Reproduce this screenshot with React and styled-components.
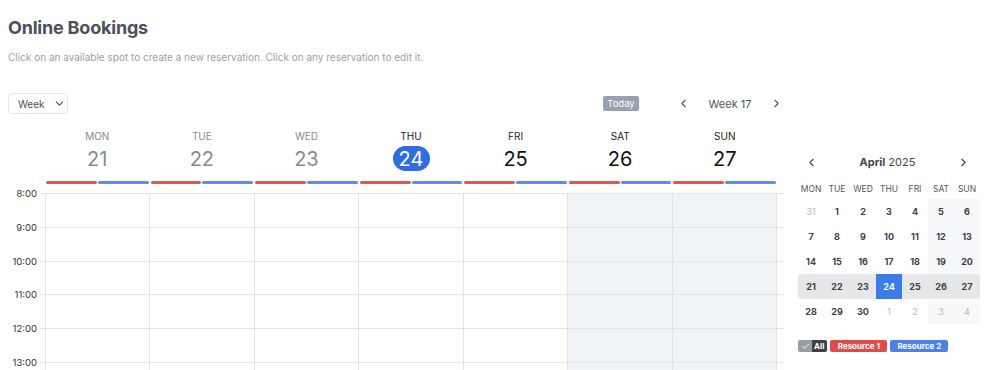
import React from 'react'
import styled, { createGlobalStyle } from 'styled-components'
import { ChevronLeft, ChevronRight, ChevronDown, Check } from 'lucide-react'

const GlobalStyle = createGlobalStyle`
html, body {
    margin: 0;
    padding: 0;
    overflow: hidden;
    background: #fff;
}
body {
    font-family: Inter, "Liberation Sans", Arial, sans-serif;
    color: #374151;
}
`

const HOUR = 33.8

const Page = styled.div`
padding: 14px 4px 0 8px;
`

const Title = styled.h1`
margin: 0;
font-size: 18px;
font-weight: 700;
color: #4b5059;
line-height: 28px;
letter-spacing: -0.2px;
`

const Subtitle = styled.p`
margin: 7px 0 0;
font-size: 10px;
color: #9aa0a8;
line-height: 16px;
`

const Layout = styled.div`
display: flex;
gap: 14px;
margin-top: 28px;
`

const Main = styled.div`
width: 776px;
`

const Toolbar = styled.div`
display: flex;
justify-content: space-between;
align-items: center;
height: 21px;
`

const Dropdown = styled.button`
display: flex;
align-items: center;
gap: 8px;
width: 60px;
height: 21px;
padding: 0 0 0 9px;
border: 1px solid #e3e5e8;
border-radius: 4px;
background: #fff;
font-family: inherit;
font-size: 10px;
color: #4b5059;
`

const Nav = styled.div`
display: flex;
align-items: center;
margin-right: 1px;
`

const TodayButton = styled.button`
height: 15px;
width: 36px;
padding: 0;
border: none;
border-radius: 2px;
background: #98a1b1;
color: #fff;
font-family: inherit;
font-size: 9.5px;
margin-right: 38px;
`

const NavArrow = styled.span`
display: flex;
color: #555;
`

const WeekLabel = styled.span`
font-size: 11px;
color: #555;
width: 80px;
text-align: center;
`

const Header = styled.div`
display: flex;
padding-left: 37px;
padding-right: 7px;
margin-top: 16px;
`

const DayHead = styled.div`
flex: 1;
display: flex;
flex-direction: column;
align-items: center;
`

const DayName = styled.div`
font-size: 10px;
line-height: 12px;
color: ${p => (p.$past ? '#8a8a8a' : '#222')};
`

const DayNum = styled.div`
margin-top: 4px;
height: 25px;
min-width: 37px;
border-radius: 13px;
display: flex;
align-items: center;
justify-content: center;
font-size: 20px;
color: ${p => (p.$today ? '#fff' : p.$past ? '#8a8a8a' : '#111')};
background: ${p => (p.$today ? '#2f6ee0' : 'transparent')};
`

const Bars = styled.div`
align-self: stretch;
display: flex;
gap: 1px;
padding: 0 1px;
margin-top: 10px;
`

const Bar = styled.div`
flex: 1;
height: 3px;
border-radius: 1.5px;
background: ${p => p.$color};
`

const lines = `repeating-linear-gradient(to bottom, #e2e5e8 0, #e2e5e8 1px, transparent 1px, transparent ${HOUR}px)`

const Body = styled.div`
display: flex;
margin-top: 9px;
`

const Times = styled.div`
width: 32px;
flex-shrink: 0;
`

const TimeLabel = styled.div`
height: ${HOUR}px;
padding-right: 3px;
text-align: right;
font-size: 9.5px;
line-height: 12px;
color: #333;
transform: translateY(-5.5px);
`

const Grid = styled.div`
flex: 1;
display: flex;
padding: 0 7px 0 5px;
background-image: ${lines};
height: ${HOUR * 6}px;
`

const DayCol = styled.div`
flex: 1;
border-left: 1px solid #dfe5e7;
background-color: ${p => (p.$weekend ? '#f1f4f7' : 'transparent')};
background-image: ${lines};
&:last-child {
    border-right: 1px solid #dfe5e7;
}
`

const Side = styled.div`
width: 182px;
padding-top: 61px;
`

const MonthHeader = styled.div`
display: flex;
align-items: center;
justify-content: space-between;
padding: 0 10px 0 7px;
height: 16px;
font-size: 11px;
color: #3f4550;
b {
    font-weight: 700;
}
`

const MiniRow = styled.div`
display: grid;
grid-template-columns: repeat(7, 1fr);
height: 25px;
border-radius: 3px;
background: ${p => (p.$selected ? '#e6e7e9' : 'transparent')};
`

const WeekNames = styled(MiniRow)`
height: 20px;
margin-top: 9px;
`

const WeekDayName = styled.div`
display: flex;
align-items: center;
justify-content: center;
font-size: 8.5px;
color: #555;
`

const MiniCell = styled.div`
display: flex;
align-items: center;
justify-content: center;
font-size: 9px;
font-weight: ${p => (p.$other ? 400 : 700)};
color: ${p => (p.$active ? '#fff' : p.$other ? '#b5b8bc' : '#3a3f47')};
background: ${p => (p.$active ? '#3b7cec' : p.$weekend ? '#f7f8f9' : 'transparent')};
`

const Legend = styled.div`
display: flex;
gap: 3px;
margin-top: 16px;
`

const AllChip = styled.div`
display: flex;
height: 12px;
border-radius: 2px;
overflow: hidden;
font-size: 8px;
font-weight: 700;
color: #fff;
`

const CheckPart = styled.span`
display: flex;
align-items: center;
justify-content: center;
width: 14px;
background: #9a9da2;
`

const AllPart = styled.span`
display: flex;
align-items: center;
padding: 0 3px 0 2px;
background: #3c4047;
`

const ResourceChip = styled.div`
height: 12px;
width: ${p => p.$w}px;
border-radius: 2px;
display: flex;
align-items: center;
justify-content: center;
background: ${p => p.$color};
color: #fff;
font-size: 8px;
font-weight: 700;
`

const days = [
  { name: 'MON', num: 21, past: true },
  { name: 'TUE', num: 22, past: true },
  { name: 'WED', num: 23, past: true },
  { name: 'THU', num: 24, today: true },
  { name: 'FRI', num: 25 },
  { name: 'SAT', num: 26, weekend: true },
  { name: 'SUN', num: 27, weekend: true },
]

const hours = [8, 9, 10, 11, 12, 13]

const weeks = [
  [31, 1, 2, 3, 4, 5, 6],
  [7, 8, 9, 10, 11, 12, 13],
  [14, 15, 16, 17, 18, 19, 20],
  [21, 22, 23, 24, 25, 26, 27],
  [28, 29, 30, 1, 2, 3, 4],
]

const RED = '#d85a52'
const BLUE = '#5b8ee6'

export default function App() {
  return (
    <Page>
      <GlobalStyle />
      <Title>Online Bookings</Title>
      <Subtitle>Click on an available spot to create a new reservation. Click on any reservation to edit it.</Subtitle>
      <Layout>
        <Main>
          <Toolbar>
            <Dropdown>
              Week <ChevronDown size={13} strokeWidth={2} />
            </Dropdown>
            <Nav>
              <TodayButton>Today</TodayButton>
              <NavArrow><ChevronLeft size={13} strokeWidth={2} /></NavArrow>
              <WeekLabel>Week 17</WeekLabel>
              <NavArrow><ChevronRight size={13} strokeWidth={2} /></NavArrow>
            </Nav>
          </Toolbar>
          <Header>
            {days.map(d => (
              <DayHead key={d.name}>
                <DayName $past={d.past}>{d.name}</DayName>
                <DayNum $past={d.past} $today={d.today}>{d.num}</DayNum>
                <Bars>
                  <Bar $color={RED} />
                  <Bar $color={BLUE} />
                </Bars>
              </DayHead>
            ))}
          </Header>
          <Body>
            <Times>
              {hours.map(h => (
                <TimeLabel key={h}>{h}:00</TimeLabel>
              ))}
            </Times>
            <Grid>
              {days.map(d => (
                <DayCol key={d.name} $weekend={d.weekend} />
              ))}
            </Grid>
          </Body>
        </Main>
        <Side>
          <MonthHeader>
            <ChevronLeft size={13} strokeWidth={2} />
            <span><b>April</b> 2025</span>
            <ChevronRight size={13} strokeWidth={2} />
          </MonthHeader>
          <WeekNames>
            {days.map(d => (
              <WeekDayName key={d.name}>{d.name}</WeekDayName>
            ))}
          </WeekNames>
          {weeks.map((w, i) => {
            const selected = i === 3
            return (
              <MiniRow key={i} $selected={selected}>
                {w.map((n, j) => {
                  const other = (i === 0 && n > 7) || (i === 4 && n < 7)
                  return (
                    <MiniCell
                      key={j}
                      $other={other}
                      $weekend={j > 4 && !selected}
                      $active={selected && n === 24}
                    >
                      {n}
                    </MiniCell>
                  )
                })}
              </MiniRow>
            )
          })}
          <Legend>
            <AllChip>
              <CheckPart><Check size={9} strokeWidth={2.5} /></CheckPart>
              <AllPart>All</AllPart>
            </AllChip>
            <ResourceChip $color="#df4b4b" $w={57}>Resource 1</ResourceChip>
            <ResourceChip $color="#4a82ea" $w={58}>Resource 2</ResourceChip>
          </Legend>
        </Side>
      </Layout>
    </Page>
  )
}
